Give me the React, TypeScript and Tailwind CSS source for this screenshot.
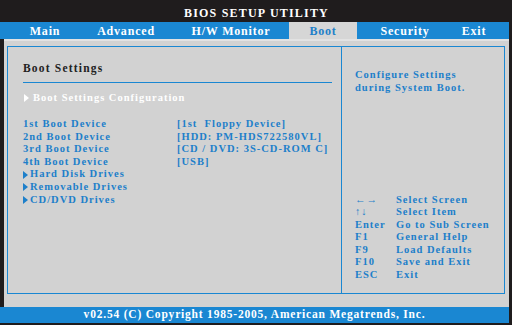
import React from "react";

const serif = { fontFamily: '"Liberation Serif", "DejaVu Serif", serif' };

const tabs = [
  { label: "Main", w: "w-[82px]" },
  { label: "Advanced", w: "w-[80px]" },
  { label: "H/W Monitor", w: "w-[123px] pl-[7px]" },
  { label: "Boot", w: "w-[68px]", active: true },
  { label: "Security", w: "w-[96px]" },
  { label: "Exit", w: "w-[42px]" },
];

const devices = [
  ["1st Boot Device", "[1st  Floppy Device]"],
  ["2nd Boot Device", "[HDD: PM-HDS722580VL]"],
  ["3rd Boot Device", "[CD / DVD: 3S-CD-ROM C]"],
  ["4th Boot Device", "[USB]"],
];

const subMenus = ["Hard Disk Drives", "Removable Drives", "CD/DVD Drives"];

const keys = [
  ["←→", "Select Screen"],
  ["↑↓", "Select Item"],
  ["Enter", "Go to Sub Screen"],
  ["F1", "General Help"],
  ["F9", "Load Defaults"],
  ["F10", "Save and Exit"],
  ["ESC", "Exit"],
];

function Arrow({ className = "" }: { className?: string }) {
  return (
    <svg width="5" height="8" viewBox="0 0 5 8" className={className}>
      <path d="M0 0 L5 4 L0 8 Z" fill="currentColor" />
    </svg>
  );
}

export default function App() {
  return (
    <div
      className="w-[512px] h-[325px] bg-[#1f1c1d] pl-[4px] pr-[3px] pb-[2px] flex flex-col font-bold overflow-hidden"
      style={serif}
    >
      {/* title */}
      <div className="h-[22px] flex items-center justify-center pt-[3px] text-white text-[12px] tracking-[1.2px]">
        BIOS SETUP UTILITY
      </div>

      {/* tabs */}
      <div className="h-[17px] bg-[#1a87d2] flex items-stretch -ml-[4px] pl-[4px] text-[12px] tracking-[0.8px]">
        {tabs.map((t) => (
          <div
            key={t.label}
            className={`${t.w} flex items-center justify-center ${
              t.active ? "bg-[#d6d6d6] text-[#1f80c9]" : "text-white"
            }`}
          >
            {t.label}
          </div>
        ))}
      </div>

      {/* body */}
      <div className="flex-1 bg-[#d2d2d2] pt-[5px] pl-[3px] pr-[4px] pb-[13px] border-t-[2px] border-[#e2e2e2]">
        <div className="h-full border border-[#1a87d2] flex">
          {/* left panel */}
          <div className="w-[334px] border-r border-[#1a87d2] pl-[15px] pr-[9px] pt-[14px] text-[10.5px] tracking-[1px] text-[#1d7fca]">
            <div className="text-[#222] text-[11.5px] tracking-[1.2px] leading-[14px]">Boot Settings</div>
            <div className="mt-[7px] h-px bg-[#1a87d2]" />
            <div className="mt-[8px] flex items-center gap-[4px] text-white leading-[14px] pl-[1px]">
              <Arrow />
              <span>Boot Settings Configuration</span>
            </div>
            <div className="mt-[13px] flex flex-col leading-[12.6px]">
              {devices.map(([k, v]) => (
                <div key={k} className="flex">
                  <span className="w-[154px]">{k}</span>
                  <span className="whitespace-pre">{v}</span>
                </div>
              ))}
              {subMenus.map((s) => (
                <div key={s} className="flex items-center gap-[2px]">
                  <Arrow />
                  <span>{s}</span>
                </div>
              ))}
            </div>
          </div>

          {/* right panel */}
          <div className="flex-1 pl-[13px] pt-[21px] text-[10.5px] tracking-[1px] text-[#1d7fca] flex flex-col">
            <div className="leading-[13px]">
              <div>Configure Settings</div>
              <div>during System Boot.</div>
            </div>
            <div className="mt-auto mb-[12px] flex flex-col leading-[12.5px]">
              {keys.map(([k, d]) => (
                <div key={k} className="flex">
                  <span className="w-[41px]">{k}</span>
                  <span>{d}</span>
                </div>
              ))}
            </div>
          </div>
        </div>
      </div>

      {/* footer */}
      <div className="h-[16px] bg-[#1a87d2] -ml-[4px] flex items-center justify-center text-white text-[11.5px] tracking-[0.8px]">
        v02.54 (C) Copyright 1985-2005, American Megatrends, Inc.
      </div>
    </div>
  );
}
